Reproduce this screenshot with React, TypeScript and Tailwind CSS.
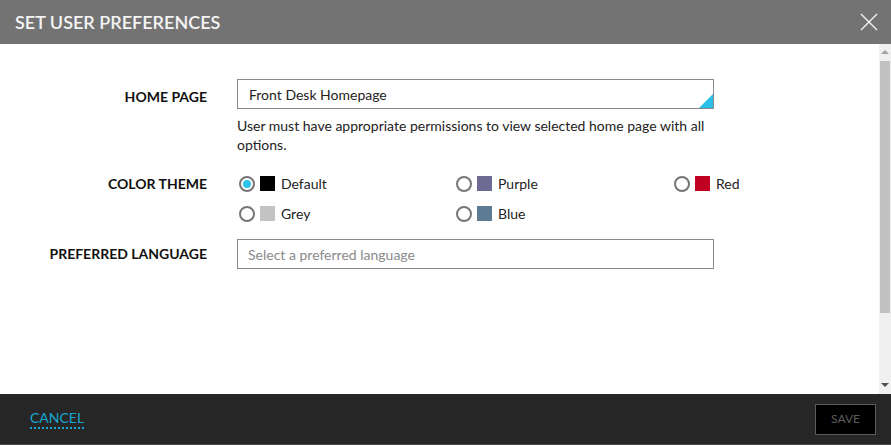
import React, { useState } from 'react';

const themes = [
  { id: 'default', label: 'Default', color: 'bg-[#000000]' },
  { id: 'purple', label: 'Purple', color: 'bg-[#6d6a94]' },
  { id: 'red', label: 'Red', color: 'bg-[#bf0020]' },
  { id: 'grey', label: 'Grey', color: 'bg-[#c3c3c3]' },
  { id: 'blue', label: 'Blue', color: 'bg-[#5e7b94]' },
];

const Radio: React.FC<{ checked: boolean }> = ({ checked }) => (
  <span className="flex h-[16px] w-[16px] shrink-0 items-center justify-center rounded-full border-2 border-[#767676] bg-white">
    {checked && <span className="h-[8px] w-[8px] rounded-full bg-[#2ec2e8]" />}
  </span>
);

const App: React.FC = () => {
  const [theme, setTheme] = useState('default');

  return (
    <div className="flex h-[445px] w-[891px] flex-col bg-white font-['Lato',sans-serif] text-[14px] text-[#222]">
      {/* header */}
      <div className="flex h-[44px] shrink-0 items-center justify-between bg-[#737373] pl-[15px] pr-[10px]">
        <h1 className="text-[18px] font-semibold text-[#f4f4f4]">SET USER PREFERENCES</h1>
        <button className="flex h-[24px] w-[24px] items-center justify-center">
          <svg width="18" height="18" viewBox="0 0 18 18" stroke="#f2f2f2" strokeWidth="1.4">
            <path d="M1 1 L17 17 M17 1 L1 17" />
          </svg>
        </button>
      </div>

      {/* body */}
      <div className="flex min-h-0 flex-1">
        <div className="flex-1 pt-[35px]">
          <div className="grid grid-cols-[207px_1fr] gap-x-[30px]">
            <div className="pt-[7px] text-right font-bold text-[#111]">HOME PAGE</div>
            <div>
              <div className="relative flex h-[30px] w-[477px] items-center border border-[#8a8a8a] px-[11px] text-[#222]">
                Front Desk Homepage
                <span className="absolute bottom-0 right-0 h-0 w-0 border-b-[14px] border-l-[14px] border-b-[#29bfe6] border-l-transparent" />
              </div>
              <p className="mt-[7px] w-[500px] leading-[19px] text-[#222]">
                User must have appropriate permissions to view selected home page with all options.
              </p>
            </div>

            <div className="mt-[19px] text-right font-bold text-[#111]">COLOR THEME</div>
            <div className="mt-[19px] grid grid-cols-[217px_218px_1fr] gap-y-[9px] pl-[2px]">
              {themes.map((t) => (
                <label key={t.id} className="flex cursor-pointer items-center" onClick={() => setTheme(t.id)}>
                  <Radio checked={theme === t.id} />
                  <span className={`ml-[5px] h-[15px] w-[15px] ${t.color}`} />
                  <span className="ml-[6px]">{t.label}</span>
                </label>
              ))}
            </div>

            <div className="mt-[19px] text-right font-bold text-[#111]">PREFERRED LANGUAGE</div>
            <div className="mt-[15px]">
              <div className="flex h-[30px] w-[477px] items-center border border-[#8a8a8a] px-[10px] text-[#8a8a8a]">
                Select a preferred language
              </div>
            </div>
          </div>
        </div>

        {/* scrollbar */}
        <div className="flex w-[12px] shrink-0 flex-col items-center bg-[#f0f0f0]">
          <span className="mt-[6px] h-0 w-0 border-x-[4px] border-b-[4px] border-x-transparent border-b-[#a3a3a3]" />
          <div className="mt-[7px] h-[252px] w-[10px] bg-[#c1c1c1]" />
          <div className="flex-1" />
          <span className="mb-[7px] h-0 w-0 border-x-[4px] border-t-[4px] border-x-transparent border-t-[#505050]" />
        </div>
      </div>

      {/* footer */}
      <div className="flex h-[51px] shrink-0 items-center justify-between border-b border-b-[#4a4a4a] bg-[#262626] pl-[30px] pr-[15px]">
        <button className="border-b-2 border-dotted border-[#18a7d4] pb-[1px] text-[14px] leading-[16px] text-[#18a7d4]">
          CANCEL
        </button>
        <button className="flex h-[31px] w-[61px] items-center justify-center border border-[#5c5c5c] bg-black text-[12px] text-[#5c5c5c]">
          SAVE
        </button>
      </div>
    </div>
  );
};

export default App;
